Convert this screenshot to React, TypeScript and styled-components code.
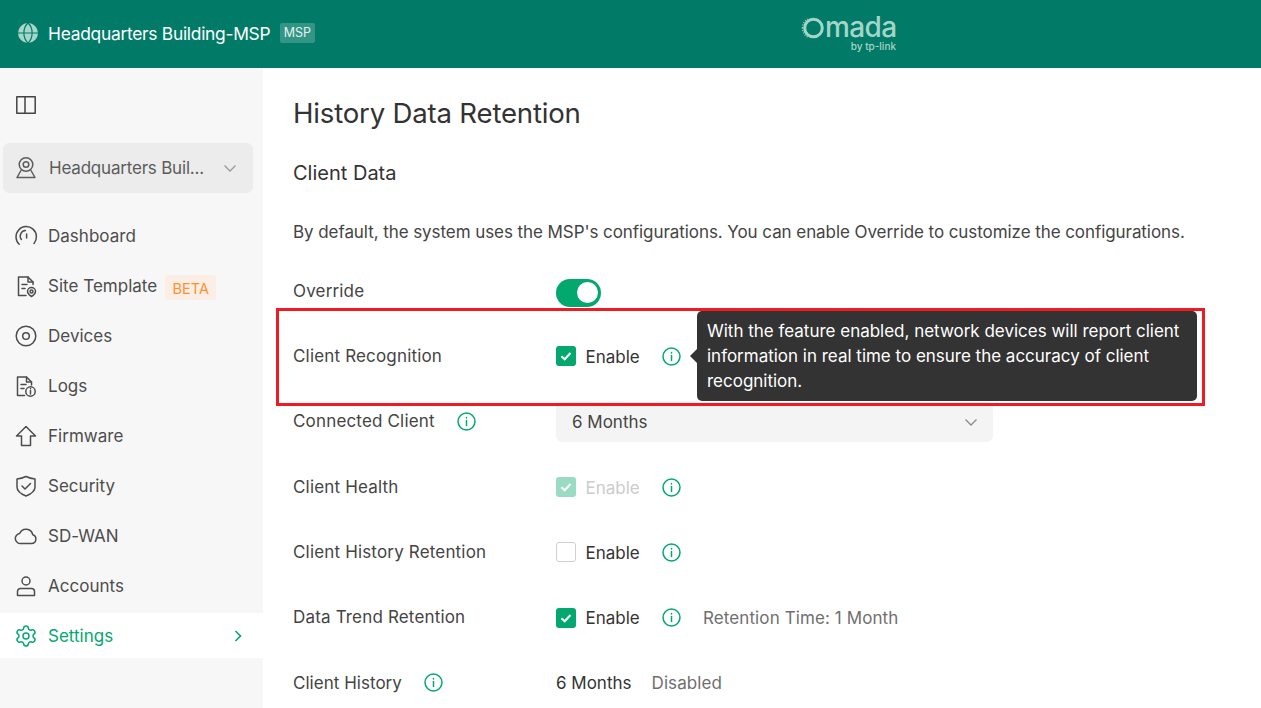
import * as React from 'react';
import styled, { createGlobalStyle } from 'styled-components';
import { Settings } from 'lucide-react';

const GlobalStyle = createGlobalStyle`
  html, body {
    margin: 0;
    height: 100%;
    overflow: hidden;
    background: #fff;
  }
  body {
    font-family: Inter, "Noto Sans", "Liberation Sans", sans-serif;
    color: #333;
  }
  * { box-sizing: border-box; }
`;

const green = '#03a86f';

const Page = styled.div`
  display: flex;
  flex-direction: column;
  height: 708px;
  overflow: hidden;
`;

const Header = styled.header`
  flex: none;
  position: relative;
  display: flex;
  align-items: center;
  height: 68px;
  padding: 0 0 2px 17px;
  background: #017b67;
`;

const SiteName = styled.span`
  margin-left: 9px;
  font-size: 17.4px;
  letter-spacing: -0.28px;
  color: #fff;
`;

const MspBadge = styled.span`
  margin-left: 10px;
  padding: 0 3.5px;
  height: 20px;
  line-height: 20px;
  border-radius: 2px;
  font-size: 12.5px;
  color: #e4f2ee;
  background: rgba(255, 255, 255, 0.2);
`;

const Logo = styled.div`
  position: absolute;
  left: 801px;
  top: 15px;
  width: 96px;
  color: #a4d5c9;
`;

const LogoWord = styled.div`
  display: flex;
  align-items: center;
  height: 25px;
  line-height: 25px;
  font-size: 28px;
  font-weight: 500;
  letter-spacing: -0.6px;
`;

const LogoSub = styled.div`
  text-align: right;
  font-size: 10px;
  font-weight: 500;
  line-height: 10px;
  margin-top: 1px;
  padding-right: 1px;
`;

const Body = styled.div`
  flex: 1;
  display: flex;
  min-height: 0;
`;

const Sidebar = styled.aside`
  flex: none;
  width: 263px;
  background: #f7f7f7;
  padding-top: 25px;
`;

const PanelButton = styled.div`
  display: flex;
  align-items: center;
  height: 24px;
  padding-left: 14px;
  margin-bottom: 26px;
  color: #444;
`;

const SiteSelect = styled.div`
  display: flex;
  align-items: center;
  width: 250px;
  height: 50px;
  margin: 0 0 20px 3px;
  padding: 0 16px 0 11px;
  border-radius: 6px;
  background: #ececec;
  color: #5c5c5c;
  font-size: 17px;
`;

const SiteSelectText = styled.span`
  flex: 1;
  margin-left: 11px;
  white-space: nowrap;
  letter-spacing: -0.2px;
`;

const Nav = styled.nav`
  display: flex;
  flex-direction: column;
  gap: 5px;
`;

const NavRow = styled.div<{ $active?: boolean }>`
  display: flex;
  align-items: center;
  height: 45px;
  padding: 0 14px;
  font-size: 17px;
  letter-spacing: 0.02px;
  color: ${(p) => (p.$active ? green : '#4d4d4d')};
  background: ${(p) => (p.$active ? '#fff' : 'transparent')};
`;

const NavLabel = styled.span`
  margin-left: 10px;
`;

const BetaTag = styled.span`
  margin-left: 8px;
  margin-top: 3px;
  width: 51px;
  height: 25px;
  line-height: 27px;
  text-align: center;
  font-size: 14.5px;
  border-radius: 3px;
  color: #ff8f33;
  background: #fbefe5;
`;

const NavArrow = styled.span`
  margin-left: auto;
  display: flex;
  margin-right: 4px;
`;

const Main = styled.main`
  position: relative;
  flex: 1;
  min-width: 0;
  padding: 25px 30px 0;
  overflow: hidden;
`;

const Title = styled.h1`
  margin: 0;
  height: 40px;
  line-height: 40px;
  font-size: 27.6px;
  font-weight: 400;
  letter-spacing: -0.2px;
  color: #333;
`;

const Subtitle = styled.h2`
  margin: 25px 0 0;
  height: 30px;
  line-height: 30px;
  font-size: 20px;
  font-weight: 400;
  color: #333;
`;

const Description = styled.p`
  margin: 29px 0 0;
  height: 30px;
  line-height: 30px;
  font-size: 17px;
  letter-spacing: -0.07px;
  white-space: nowrap;
  color: #444;
`;

const Form = styled.div`
  margin-top: 11px;
  display: flex;
  flex-direction: column;
`;

const Row = styled.div`
  position: relative;
  display: grid;
  grid-template-columns: 263px 1fr;
  align-items: center;
  height: 65.33px;
`;

const Label = styled.div<{ $tight?: boolean }>`
  display: flex;
  align-items: center;
  gap: 22px;
  font-size: 17px;
  letter-spacing: ${(p) => (p.$tight ? '0.03px' : '0.17px')};
  color: #444;
`;

const Control = styled.div`
  display: flex;
  align-items: center;
  margin-top: 1px;
  font-size: 17px;
  color: #333;
`;

const Toggle = styled.div`
  position: relative;
  width: 45px;
  height: 28px;
  margin-top: 3px;
  border-radius: 14px;
  background: ${green};
`;

const Knob = styled.div`
  position: absolute;
  top: 3px;
  right: 3px;
  width: 21px;
  height: 21px;
  border-radius: 50%;
  background: #fff;
`;

const CheckBox = styled.span<{ $state: 'on' | 'off' | 'disabled' }>`
  flex: none;
  display: flex;
  align-items: center;
  justify-content: center;
  width: 20px;
  height: 20px;
  border-radius: 3px;
  border: ${(p) => (p.$state === 'off' ? '1px solid #d0d0d0' : 'none')};
  background: ${(p) => (p.$state === 'on' ? green : p.$state === 'disabled' ? '#9adcc3' : '#fff')};
`;

const EnableText = styled.span<{ $disabled?: boolean }>`
  margin-left: 9.5px;
  width: 76.5px;
  padding-top: 1px;
  color: ${(p) => (p.$disabled ? '#ccc' : '#333')};
`;

const InfoMark = styled.span`
  display: inline-flex;
  flex: none;
  width: 19px;
  height: 19px;
`;

const Muted = styled.span`
  color: #6f6f6f;
`;

const RetentionNote = styled(Muted)`
  margin-left: 22px;
  letter-spacing: 0.1px;
`;

const DisabledNote = styled(Muted)`
  margin-left: 20px;
  letter-spacing: 0.1px;
`;

const SelectBox = styled.div`
  display: flex;
  align-items: center;
  justify-content: space-between;
  width: 437px;
  height: 40px;
  padding: 0 15px 0 16px;
  border-radius: 6px;
  background: #f4f4f4;
  color: #444;
`;

const Tooltip = styled.div`
  position: absolute;
  left: 404px;
  top: -12px;
  z-index: 1;
  width: 500px;
  height: 90px;
  padding: 8px 10px;
  border-radius: 5px;
  background: #333;
  color: #fff;
  font-size: 17px;
  line-height: 25px;
  letter-spacing: -0.01px;
  &::before {
    content: '';
    position: absolute;
    left: -7px;
    top: 38px;
    border-style: solid;
    border-width: 7px 7px 7px 0;
    border-color: transparent #333 transparent transparent;
  }
`;

const Highlight = styled.div`
  position: absolute;
  z-index: 2;
  left: 12.5px;
  top: 240px;
  width: 929px;
  height: 98px;
  border: 3px solid #ed1c24;
  pointer-events: none;
`;

const Svg = styled.svg.attrs({
  xmlns: 'http://www.w3.org/2000/svg',
  fill: 'none',
  stroke: 'currentColor',
  strokeWidth: 1.5,
  strokeLinecap: 'round',
  strokeLinejoin: 'round',
})`
  flex: none;
  display: block;
`;

const Icon = ({ children }: { children: React.ReactNode }) => (
  <Svg width="24" height="24" viewBox="0 0 24 24">{children}</Svg>
);

const Info = () => (
  <InfoMark>
    <Svg width="19" height="19" viewBox="0 0 19 19" strokeWidth={1.7} style={{ color: green }}>
      <circle cx="9.5" cy="9.5" r="8.5" />
      <path d="M9.5 8.6v5" />
      <path d="M9.5 5.4v.7" />
    </Svg>
  </InfoMark>
);

const Check = ({ state }: { state: 'on' | 'off' | 'disabled' }) => (
  <CheckBox $state={state}>
    {state !== 'off' && (
      <svg width="14" height="14" viewBox="0 0 14 14" fill="none" stroke="#fff" strokeWidth="2.1">
        <path d="M2.5 7.2 5.7 10.2 11.5 4" />
      </svg>
    )}
  </CheckBox>
);

const Chevron = ({ color }: { color: string }) => (
  <svg width="14" height="14" viewBox="0 0 14 14" fill="none" stroke={color} strokeWidth="1.3">
    <path d="M1.5 4.5 7 10l5.5-5.5" />
  </svg>
);

const navItems: { label: string; icon: React.ReactNode; beta?: boolean; active?: boolean }[] = [
  {
    label: 'Dashboard',
    icon: (
      <Icon>
        <path d="M5.2 20.2A10.2 10.2 0 1 1 20 19.4" />
        <path d="M7.4 15.5a5.6 5.6 0 0 1 4-9" />
        <path d="M12.6 10v4" />
      </Icon>
    ),
  },
  {
    label: 'Site Template',
    beta: true,
    icon: (
      <Icon>
        <path d="M12 21.5H4.5V3H14l5 5v2.5" />
        <path d="M14 3v5h5" />
        <path d="M8 10.5h5M8 14.5h3" />
        <path d="M17.5 22.500c-2-1.300-4-2.800-4-5a4 4 0 0 1 8 0c0 2.200-2 3.700-4 5z" />
        <circle cx="17.5" cy="17.5" r="1.5" />
      </Icon>
    ),
  },
  {
    label: 'Devices',
    icon: (
      <Icon>
        <circle cx="12" cy="12" r="9.8" />
        <circle cx="12" cy="12" r="3.3" />
      </Icon>
    ),
  },
  {
    label: 'Logs',
    icon: (
      <Icon>
        <path d="M10.5 21.5h-7V3h9l5 5v3" />
        <path d="M12.5 3v5h5" />
        <path d="M7 10.5h5M7 14.5h3" />
        <circle cx="16.5" cy="17.5" r="4.7" />
        <path d="M16.5 16.5V20M16.5 14.5v.3" />
      </Icon>
    ),
  },
  {
    label: 'Firmware',
    icon: (
      <Icon>
        <path d="M12 2.5 21.500 12H16.500v9.500h-9V12H2.500z" />
      </Icon>
    ),
  },
  {
    label: 'Security',
    icon: (
      <Icon>
        <path d="M12 2.500c3 1.400 6 2.200 9 2.500v8c0 4-3.500 6.800-9 9-5.500-2.200-9-5-9-9V5c3-.3 6-1.100 9-2.500z" />
        <path d="m8 12 3 3 5.500-5.500" />
      </Icon>
    ),
  },
  {
    label: 'SD-WAN',
    icon: (
      <Icon>
        <path d="M7 19.500h10.500a4.500 4.500 0 0 0 1.200-8.800 6.800 6.800 0 0 0-13-1.200A5 5 0 0 0 7 19.500z" />
      </Icon>
    ),
  },
  {
    label: 'Accounts',
    icon: (
      <Icon>
        <circle cx="12" cy="7" r="4" />
        <path d="M3.500 21.500V17.500c0-1.700 1.300-3 3-3h11c1.700 0 3 1.300 3 3v4z" />
      </Icon>
    ),
  },
  {
    label: 'Settings',
    active: true,
    icon: <Settings size={24} strokeWidth={1.5} />,
  },
];

export default function App() {
  return (
    <Page>
      <GlobalStyle />
      <Header>
        <svg width="22" height="22" viewBox="0 0 22 22" fill="none">
          <circle cx="11" cy="11" r="10" fill="#a6d6ca" />
          <path d="M11 1c-5.500 5-5.500 15 0 20M11 1c5.500 5 5.500 15 0 20M1 11h20" stroke="#017b67" strokeWidth="1.2" />
        </svg>
        <SiteName>Headquarters Building-MSP</SiteName>
        <MspBadge>MSP</MspBadge>
        <Logo>
          <LogoWord>
            <svg width="24" height="24" viewBox="0 0 24 24" fill="none" stroke="currentColor">
              <circle cx="12.5" cy="12" r="8.8" strokeWidth="3" />
              <path d="M1.500 12a10.500 10.500 0 0 1 5-9M6.500 21a10.500 10.500 0 0 1-5-9" strokeWidth="1.5" strokeDasharray="1 1.5" />
            </svg>
            mada
          </LogoWord>
          <LogoSub>by tp-link</LogoSub>
        </Logo>
      </Header>
      <Body>
        <Sidebar>
          <PanelButton>
            <Svg width="24" height="24" viewBox="0 0 24 24" strokeLinecap="butt" strokeLinejoin="miter">
              <path d="M2.800 3.700h18.400v16.600H2.800zM11 3.700v16.600" />
            </Svg>
          </PanelButton>
          <SiteSelect>
            <Icon>
              <circle cx="12" cy="8.5" r="6.800" />
              <circle cx="12" cy="8.5" r="2.800" />
              <path d="M7 14.500 3 21.500h18l-4-7" />
            </Icon>
            <SiteSelectText>Headquarters Buil...</SiteSelectText>
            <Chevron color="#999" />
          </SiteSelect>
          <Nav>
            {navItems.map((item) => (
              <NavRow key={item.label} $active={item.active}>
                {item.icon}
                <NavLabel>{item.label}</NavLabel>
                {item.beta && <BetaTag>BETA</BetaTag>}
                {item.active && (
                  <NavArrow>
                    <svg width="14" height="14" viewBox="0 0 14 14" fill="none" stroke={green} strokeWidth="1.6">
                      <path d="m4.500 2 5 5-5 5" />
                    </svg>
                  </NavArrow>
                )}
              </NavRow>
            ))}
          </Nav>
        </Sidebar>
        <Main>
          <Title>History Data Retention</Title>
          <Subtitle>Client Data</Subtitle>
          <Description>
            By default, the system uses the MSP's configurations. You can enable Override to customize the configurations.
          </Description>
          <Form>
            <Row>
              <Label>Override</Label>
              <Control>
                <Toggle><Knob /></Toggle>
              </Control>
            </Row>
            <Row>
              <Label>Client Recognition</Label>
              <Control>
                <Check state="on" />
                <EnableText>Enable</EnableText>
                <Info />
              </Control>
              <Tooltip>
                With the feature enabled, network devices will report client information in real time to ensure the accuracy of client recognition.
              </Tooltip>
            </Row>
            <Row>
              <Label>Connected Client <Info /></Label>
              <Control>
                <SelectBox>
                  6 Months
                  <Chevron color="#8a8a8a" />
                </SelectBox>
              </Control>
            </Row>
            <Row>
              <Label>Client Health</Label>
              <Control>
                <Check state="disabled" />
                <EnableText $disabled>Enable</EnableText>
                <Info />
              </Control>
            </Row>
            <Row>
              <Label>Client History Retention</Label>
              <Control>
                <Check state="off" />
                <EnableText>Enable</EnableText>
                <Info />
              </Control>
            </Row>
            <Row>
              <Label>Data Trend Retention</Label>
              <Control>
                <Check state="on" />
                <EnableText>Enable</EnableText>
                <Info />
                <RetentionNote>Retention Time: 1 Month</RetentionNote>
              </Control>
            </Row>
            <Row>
              <Label $tight>Client History <Info /></Label>
              <Control>
                6 Months
                <DisabledNote>Disabled</DisabledNote>
              </Control>
            </Row>
          </Form>
          <Highlight />
        </Main>
      </Body>
    </Page>
  );
}
